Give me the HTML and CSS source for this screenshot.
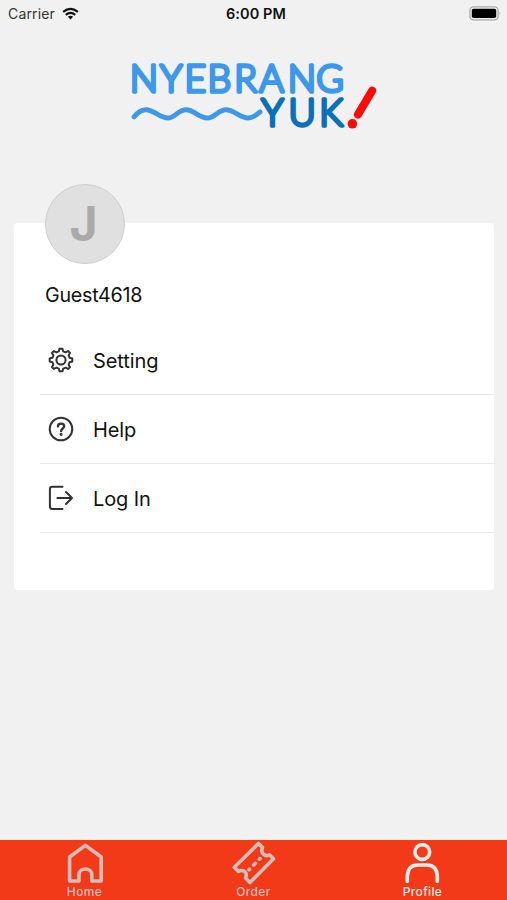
FILE: index.html
```html
<!DOCTYPE html>
<html lang="en">
<head>
<meta charset="utf-8">
<title>Profile</title>
<link rel="stylesheet" href="styles.css">
</head>
<body>
<div class="app">
  <header class="status">
    <div class="carrier"><span>Carrier</span>
      <svg class="wifi" viewBox="0 0 18 13"><g fill="none" stroke="#111" stroke-width="2.3"><path d="M1.2 4.8Q9 -1.6 16.8 4.8"/><path d="M4 8Q9 3.8 14 8"/></g><path fill="#111" d="M6.2 10Q9 7.8 11.8 10L9 12.8Z"/></svg>
    </div>
    <div class="clock">6:00 PM</div>
    <svg class="battery" viewBox="0 0 33 15"><rect x=".9" y=".9" width="28.2" height="13" rx="3.6" fill="#f1f1f1" stroke="#aaa" stroke-width="1.3"/><rect x="2.8" y="2.8" width="24.4" height="9.2" rx="1.8"/><path fill="#999" d="M30.6 5.2Q32.4 7.4 30.6 9.6Z"/></svg>
  </header>
  <div class="brand">
    <svg class="logo" viewBox="127 58 254 78">
      <text class="logo-top" y="92.2" x="129.8 160 184.6 207.6 234.2 259.3 287.8 316.2">NYEBRANG</text>
      <text class="logo-bottom" y="126.4" x="261.3 288.6 319.2">YUK</text>
      <path class="wave" d="M134.2 116.8C138 112 142 109.7 146 109.8C154 110 160 118 168 118C175 118 178 109.8 186 109.8C194 109.8 199 118 207 118C215 118 218 109.8 226 109.8C234 109.8 240 118 248 118C254 118 257 114 260 112"/>
      <path class="mark" d="M372.2 90.6L357.9 114.6"/><circle cx="352.4" cy="123.8" r="4.8" fill="#ff0909"/>
    </svg>
  </div>
  <main class="card">
    <div class="avatar"><span>J</span></div>
    <div class="name">Guest4618</div>
    <nav class="menu">
      <a class="row"><svg class="icon" viewBox="0 0 26 26"><circle cx="13" cy="13" r="4.6"/><path d="M10.8 4.4L11.5 1.7H14.5L15.2 4.4L17.7 5.4L20.1 4L22 5.9L20.6 8.3L21.6 10.8L24.3 11.5V14.5L21.6 15.2L20.6 17.7L22 20.1L20.1 22L17.7 20.6L15.2 21.6L14.5 24.3H11.5L10.8 21.6L8.3 20.6L5.9 22L4 20.1L5.4 17.7L4.4 15.2L1.7 14.5V11.5L4.4 10.8L5.4 8.3L4 5.9L5.9 4L8.3 5.4Z"/></svg><span>Setting</span></a>
      <a class="row wide"><svg class="icon" viewBox="0 0 26 26"><circle cx="13" cy="13" r="11.3"/><path stroke-width="2.3" d="M9.9 10.5C9.9 6.5 16.2 6.7 16.2 10.3C16.2 12.6 13.1 12.5 13.1 15.2"/><circle cx="13.1" cy="18.3" r=".6"/></svg><span>Help</span></a>
      <a class="row"><svg class="icon" viewBox="0 0 26 26"><path d="M14.5 1.8H4.3Q1.9 1.8 1.9 4.2V21.6Q1.9 24 4.3 24H14.5M9.4 13H24M18 7L24 13L18 19"/></svg><span>Log In</span></a>
    </nav>
  </main>
  <footer class="tabs">
    <a class="tab"><svg viewBox="0 0 44 45"><path d="M6.6 17L22.4 5.4L38.2 17V41H28.8V35C28.8 27 16 27 16 35V41H6.6Z"/></svg><span>Home</span></a>
    <a class="tab"><svg viewBox="0 0 44 45"><path d="M26.5 3.5L30.5 7.5Q28.5 12.5 32 14.5Q34.5 16.5 37.5 14.8L41.5 18.7L18 42.5L13.5 38Q15.5 33.5 12.5 31.5Q9.5 29.5 6.5 31.5L2.3 27.2Z"/><path d="M17 29.8L17.6 29.2M21.6 25.1L23.4 23.3M27.4 19.2L28 18.6"/></svg><span>Order</span></a>
    <a class="tab active"><svg viewBox="0 0 44 45"><circle cx="21.3" cy="12" r="7.4"/><path d="M6.3 41.5V37Q6.3 25 17 25H25.6Q36.3 25 36.3 37V41.5"/></svg><span>Profile</span></a>
  </footer>
</div>
</body>
</html>
```
FILE: styles.css
```css
* { box-sizing: border-box; }
body { margin: 0; background: #f1f1f1; color: #111; font-family: Inter, "Liberation Sans", sans-serif; }
.app { height: 900px; display: flex; flex-direction: column; }
svg { display: block; overflow: visible; }
.status { height: 26px; padding: 0 5px 0 8px; display: grid; grid-template-columns: 1fr auto 1fr; align-items: center; font-size: 14px; }
.carrier { display: flex; align-items: center; gap: 7px; color: #333; letter-spacing: .15px; }
.wifi { width: 17px; height: 13px; }
.clock { font-weight: 600; font-size: 14.5px; letter-spacing: .1px; padding-left: 2px; }
.battery { width: 33px; height: 15px; justify-self: end; }
.brand { height: 197px; padding: 32px 0 0 127px; }
.logo { width: 254px; height: 78px; }
.logo text { font-family: Lato, sans-serif; font-weight: 300; font-size: 37.5px; stroke-width: 3.4; stroke-linejoin: round; }
.logo-top { fill: #3d98e9; stroke: #3d98e9; }
.logo-bottom { fill: #0c70b9; stroke: #0c70b9; }
.wave { fill: none; stroke: #3d98e9; stroke-width: 5; stroke-linecap: round; }
.mark { fill: none; stroke: #ff0909; stroke-width: 8; stroke-linecap: round; }
.card { height: 367px; margin: 0 13px 0 14px; background: #fff; border-radius: 4px; display: flex; flex-direction: column; }
.avatar { width: 80px; height: 80px; margin: -39px 0 0 31px; border-radius: 50%; background: #e0e0e0; border: 1px solid #cecece; display: flex; align-items: center; justify-content: center; color: #aaa; font-size: 48px; font-weight: 700; line-height: 1; flex: none; }
.avatar span { margin-right: 3px; }
.name { margin: 18px 0 0 31px; font-size: 19.7px; line-height: 26px; letter-spacing: -.25px; }
.menu { margin: 18px 0 0 26px; }
.row { display: flex; align-items: center; gap: 19.5px; height: 69px; padding-left: 7.5px; border-bottom: 1px solid #e8e8e8; font-size: 20px; letter-spacing: -.1px; }
.row span { padding-top: 2px; }
.wide { margin-right: -2px; }
.icon { width: 26px; height: 26px; fill: none; stroke: #333; stroke-width: 2; stroke-linecap: round; stroke-linejoin: round; }
.tabs { height: 60px; margin-top: auto; background: #f23a18; display: grid; grid-template-columns: repeat(3, 1fr); }
.tab { display: flex; flex-direction: column; align-items: center; color: #d2beb9; font-size: 12px; font-weight: 500; line-height: 14px; letter-spacing: .35px; }
.tab svg { width: 44px; height: 45px; fill: none; stroke: currentColor; stroke-width: 3.6; stroke-linecap: round; stroke-linejoin: round; }
.active { color: #ffeae6; }
```
